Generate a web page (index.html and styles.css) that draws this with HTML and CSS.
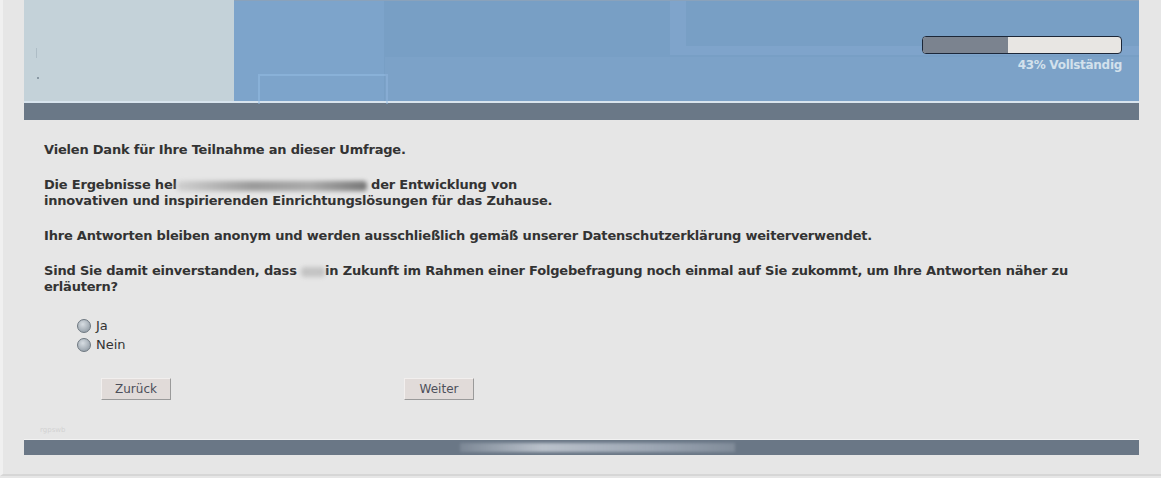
FILE: index.html
```html
<!DOCTYPE html>
<html lang="de">
<head>
    <meta charset="UTF-8">
    <meta name="viewport" content="width=device-width, initial-scale=1.0">
    <title>Umfrage</title>
    <link rel="stylesheet" href="styles.css">
</head>
<body>
    <div class="page">
        <div class="header">
            <div class="logo-panel">
                <span class="logo-mark"></span>
                <span class="logo-dot"></span>
            </div>
            <div class="banner">
                <div class="deco deco-1"></div>
                <div class="deco deco-2"></div>
                <div class="deco deco-3"></div>
                <div class="deco deco-4"></div>
                <div class="progress">
                    <div class="progress-track">
                        <div class="progress-fill" style="width: 43%"></div>
                    </div>
                    <div class="progress-label">43% Vollständig</div>
                </div>
            </div>
        </div>
        <div class="nav-bar"></div>

        <div class="content">
            <p>Vielen Dank für Ihre Teilnahme an dieser Umfrage.</p>
            <p>Die Ergebnisse hel<span class="redact redact-long"></span> der Entwicklung von<br>innovativen und inspirierenden Einrichtungslösungen für das Zuhause.</p>
            <p>Ihre Antworten bleiben anonym und werden ausschließlich gemäß unserer Datenschutzerklärung weiterverwendet.</p>
            <p>Sind Sie damit einverstanden, dass <span class="redact redact-short"></span>in Zukunft im Rahmen einer Folgebefragung noch einmal auf Sie zukommt, um Ihre Antworten näher zu<br>erläutern?</p>

            <div class="answers">
                <label class="answer"><span class="radio"></span>Ja</label>
                <label class="answer"><span class="radio"></span>Nein</label>
            </div>

            <div class="buttons">
                <button class="btn">Zurück</button>
                <button class="btn">Weiter</button>
            </div>

            <div class="credit">rgpswb</div>
        </div>

        <div class="footer">
            <span class="footer-smear"></span>
        </div>
    </div>
</body>
</html>
```

FILE: styles.css
```css
* {
    margin: 0;
    padding: 0;
    box-sizing: border-box;
}

body {
    background: #e6e6e6;
    font-family: "DejaVu Sans", Verdana, sans-serif;
    color: #333;
    border-left: 3px solid #f0f0f0;
    min-height: 476px;
    border-bottom: 2px solid #d6d6d6;
}

.page {
    margin-left: 21px;
    width: 1115px;
    background: #e6e6e6;
}

/* header */
.header {
    display: flex;
    height: 103px;
    border-bottom: 2px solid #d8e4ee;
}

.logo-panel {
    width: 210px;
    background: #c4d2d9;
    position: relative;
}

.logo-mark {
    position: absolute;
    left: 12px;
    top: 48px;
    width: 1px;
    height: 10px;
    background: #aebdc6;
}

.logo-dot {
    position: absolute;
    left: 13px;
    top: 77px;
    width: 2px;
    height: 2px;
    background: #8a99a4;
}

.banner {
    flex: 1;
    background: #789fc5;
    position: relative;
    border-top: 1px solid #8aa2bb;
}

.deco {
    position: absolute;
    pointer-events: none;
}

.deco-1 {
    left: 0;
    top: 0;
    width: 150px;
    height: 100px;
    background: rgba(140, 180, 225, 0.25);
}

.deco-2 {
    left: 24px;
    top: 73px;
    width: 130px;
    height: 30px;
    border: 2px solid rgba(150, 190, 230, 0.5);
    border-bottom: none;
}

.deco-3 {
    left: 151px;
    top: 56px;
    right: 0;
    height: 44px;
    background: rgba(135, 170, 210, 0.3);
}

.deco-4 {
    left: 436px;
    top: 0;
    right: 0;
    height: 54px;
    border-left: 16px solid rgba(140, 175, 215, 0.35);
    border-bottom: 9px solid rgba(140, 175, 215, 0.35);
}

.progress {
    position: absolute;
    right: 17px;
    top: 35px;
    width: 200px;
    text-align: right;
}

.progress-track {
    height: 18px;
    background: #e8e6e3;
    border: 1px solid #1c2738;
    border-radius: 4px;
    overflow: hidden;
}

.progress-fill {
    height: 100%;
    background: #7b838f;
}

.progress-label {
    margin-top: 4px;
    font-size: 12px;
    letter-spacing: -0.3px;
    font-weight: bold;
    color: #d3e1ec;
    line-height: 14px;
}

.nav-bar {
    height: 17px;
    background: #6a7887;
}

/* content */
.content {
    padding: 22px 20px 0 20px;
    font-size: 13px;
    height: 319px;
}

.content p {
    font-weight: bold;
    line-height: 16px;
    letter-spacing: -0.2px;
    margin-bottom: 19px;
}

.redact {
    display: inline-block;
    height: 10px;
    vertical-align: middle;
    background: #b9b9b9;
    border-radius: 4px;
    filter: blur(2px);
}

.redact-long {
    width: 190px;
    background: linear-gradient(90deg, #d0d0d0, #9a9a9a 40%, #aaa 70%, #777);
}

.redact-short {
    width: 24px;
    background: #c4c4c4;
}

.answers {
    display: flex;
    flex-direction: column;
    gap: 3px;
    padding-left: 33px;
    margin-top: 23px;
}

.answer {
    display: flex;
    align-items: center;
    gap: 5px;
    line-height: 16px;
    font-size: 13px;
}

.radio {
    width: 14px;
    height: 14px;
    border-radius: 50%;
    border: 1px solid #6d7780;
    background: radial-gradient(circle at 40% 35%, #d7dde2, #9aa4ad 75%);
}

.buttons {
    display: flex;
    gap: 233px;
    padding-left: 57px;
    margin-top: 25px;
}

.btn {
    width: 70px;
    height: 22px;
    font-family: inherit;
    font-size: 12px;
    color: #4d4f5a;
    background: #e1dbd9;
    border: 1px solid;
    border-color: #f2efee #9a9a9a #9a9a9a #f2efee;
    cursor: pointer;
}

.credit {
    margin-top: 26px;
    margin-left: -4px;
    font-size: 7px;
    color: #d2d2d2;
}

/* footer */
.footer {
    height: 16px;
    background: #6a7786;
    border-top: 1px solid #f2f2f2;
    position: relative;
}

.footer-smear {
    position: absolute;
    left: 436px;
    top: 3px;
    width: 275px;
    height: 9px;
    background: linear-gradient(90deg, rgba(200, 205, 215, 0.2), rgba(220, 225, 232, 0.7) 30%, rgba(190, 198, 210, 0.6) 70%, rgba(220, 225, 232, 0.2));
    filter: blur(1.5px);
}
```
